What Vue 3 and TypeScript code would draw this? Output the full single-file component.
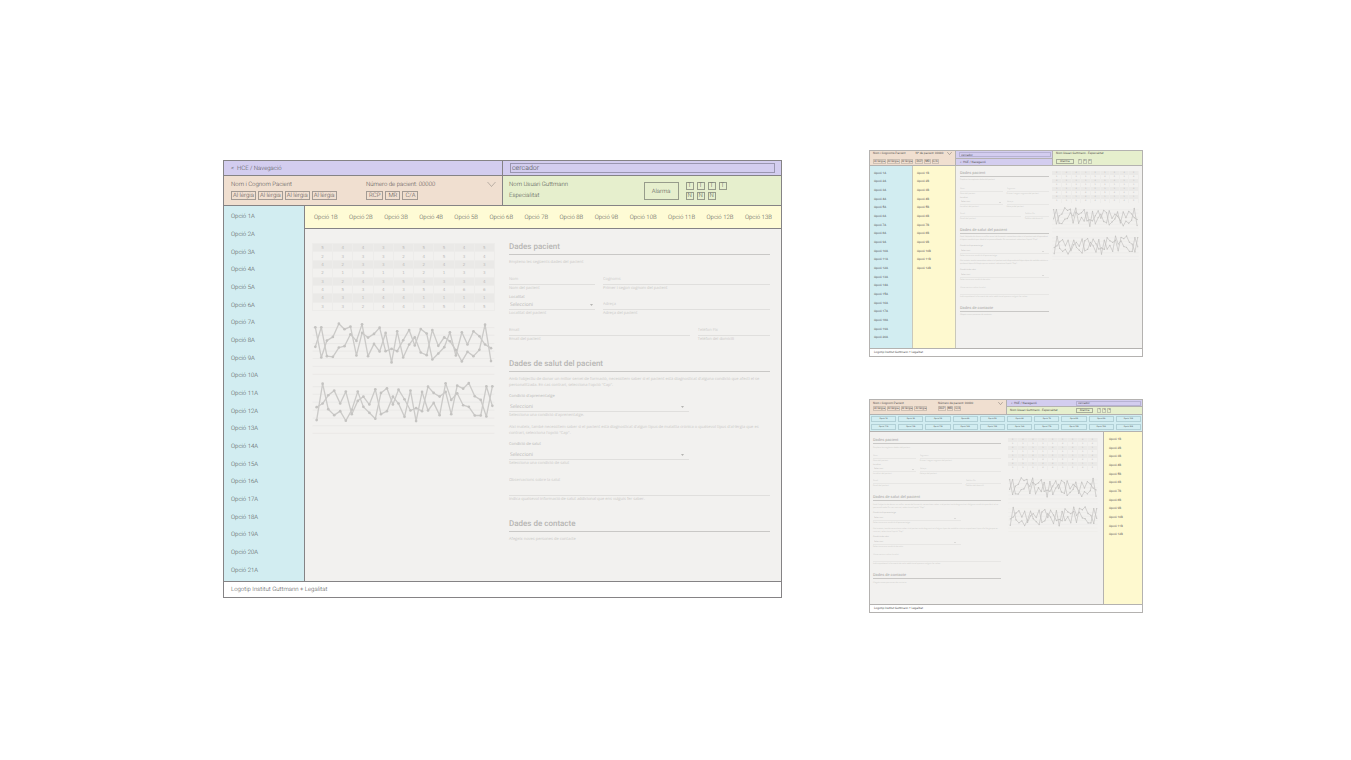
<script setup lang="ts">
interface Board {
  kind: 'large' | 'columns' | 'tabs'
  label: string
  patient: string
  record: string
  user: string
  speciality: string
  allergies: number
  flags: string[]
  countA: number
  countB: number
}

const boards: Board[] = [
  {
    kind: 'large',
    label: 'Pantalla ampla',
    patient: 'Nom i Cognom Pacient',
    record: 'Número de pacient: 00000',
    user: 'Nom Usuari Guttmann',
    speciality: 'Especialitat',
    allergies: 4,
    flags: ['T', 'T', 'T', 'T', 'N', 'N', 'N'],
    countA: 21,
    countB: 13,
  },
  {
    kind: 'columns',
    label: 'Dues columnes',
    patient: 'Nom i Cognoms Pacient',
    record: 'Nº de pacient: 00000',
    user: 'Nom Usuari Guttmann - Especialitat',
    speciality: '',
    allergies: 3,
    flags: ['T', 'N', 'N'],
    countA: 20,
    countB: 12,
  },
  {
    kind: 'tabs',
    label: 'Pestanyes',
    patient: 'Nom i Cognom Pacient',
    record: 'Número de pacient: 00000',
    user: 'Nom Usuari Guttmann - Especialitat',
    speciality: '',
    allergies: 4,
    flags: ['T', 'N', 'N'],
    countA: 20,
    countB: 12,
  },
]

const alerts = ['RCP', 'MR', 'C/A']

const scores = [
  [5, 4, 4, 3, 5, 5, 5, 4, 5],
  [2, 3, 3, 3, 2, 4, 5, 3, 4],
  [4, 2, 3, 3, 4, 2, 4, 2, 3],
  [2, 1, 3, 1, 1, 2, 1, 3, 3],
  [3, 2, 4, 3, 5, 3, 3, 3, 4],
  [4, 5, 3, 4, 3, 5, 4, 6, 6],
  [4, 3, 1, 4, 4, 1, 1, 1, 1],
  [3, 3, 2, 4, 4, 3, 5, 4, 5],
]

interface Chart {
  start: number
  grid: number[]
  series: number[][]
}

const charts: Chart[] = [
  {
    start: 10,
    grid: [17, 40, 65, 88, 110, 134, 158],
    series: [
      [16, 107, 56, 45, 5, 22, 14, 101, 33, 47, 36, 17, 88, 81, 88, 55, 24, 71, 21, 35, 113, 95, 76, 31, 101, 31, 68, 28, 43, 68, 79],
      [75, 16, 103, 105, 77, 73, 37, 57, 7, 103, 66, 89, 33, 122, 28, 107, 68, 46, 92, 100, 24, 72, 46, 58, 85, 119, 90, 103, 84, 8, 118],
    ],
  },
  {
    start: 14,
    grid: [195, 218, 242, 266, 290, 313, 336],
    series: [
      [296, 186, 263, 281, 269, 298, 265, 210, 256, 274, 292, 214, 200, 249, 204, 233, 267, 260, 269, 195, 214, 225, 211, 278, 192, 201, 184, 224, 235, 285, 194],
      [257, 246, 221, 207, 246, 210, 278, 238, 225, 249, 203, 278, 269, 225, 246, 286, 207, 299, 211, 267, 244, 281, 185, 235, 215, 251, 256, 282, 282, 194, 253],
    ],
  },
]

const STEP = 17.67
const px = (chart: Chart, i: number): number => Math.round(chart.start + i * STEP)
const line = (chart: Chart, values: number[]): string =>
  values.map((y, i) => `${px(chart, i)},${y}`).join(' ')
</script>

<template>
  <div class="page">
    <section v-for="b in boards" :key="b.kind" class="board" :class="b.kind" :aria-label="b.label">
      <nav class="crumb"><a href="#">&lt;&nbsp; HCE / Navegació</a></nav>
      <div class="search">
        <input type="search" placeholder="cercador" aria-label="cercador" />
      </div>

      <header class="patient">
        <div class="group">
          <span class="line">{{ b.patient }}</span>
          <div class="chips">
            <span v-for="n in b.allergies" :key="n" class="chip">Al·lèrgia</span>
          </div>
        </div>
        <div class="group">
          <span class="line">{{ b.record }}</span>
          <div class="chips">
            <span v-for="a in alerts" :key="a" class="chip">{{ a }}</span>
          </div>
        </div>
        <button class="chevron" type="button" aria-label="Desplega">
          <svg viewBox="0 0 18 12"><path d="M1 1 L9 10 L17 1" /></svg>
        </button>
      </header>

      <div class="user">
        <div class="who">
          <span>{{ b.user }}</span>
          <span v-if="b.speciality">{{ b.speciality }}</span>
        </div>
        <button class="alarm" type="button">Alarma</button>
        <div class="flags">
          <span v-for="(f, i) in b.flags" :key="i" class="flag">{{ f }}</span>
        </div>
      </div>

      <nav class="options-a">
        <a v-for="n in b.countA" :key="n" href="#">Opció {{ n }}A</a>
      </nav>
      <nav class="options-b">
        <a v-for="n in b.countB" :key="n" href="#">Opció {{ n }}B</a>
      </nav>

      <main class="content">
        <div class="data">
          <table>
            <tbody>
              <tr v-for="(row, r) in scores" :key="r">
                <td v-for="(v, c) in row" :key="c">{{ v }}</td>
              </tr>
            </tbody>
          </table>
          <svg class="charts" viewBox="0 0 552 338">
            <g v-for="(chart, k) in charts" :key="k">
              <line v-for="y in chart.grid" :key="y" class="rule" x1="2" x2="550" :y1="y" :y2="y" />
              <g v-for="(s, j) in chart.series" :key="j">
                <polyline class="trace" :points="line(chart, s)" />
                <circle v-for="(y, i) in s" :key="i" class="dot" :cx="px(chart, i)" :cy="y" r="4" />
              </g>
            </g>
          </svg>
        </div>

        <form class="form">
          <h2>Dades pacient</h2>
          <p><span>Empleno les següents dades del pacient</span></p>
          <div class="row">
            <div class="field">
              <input :id="b.kind + '-nom'" type="text" placeholder="Nom" />
              <label class="help" :for="b.kind + '-nom'">Nom del pacient</label>
            </div>
            <div class="field">
              <input :id="b.kind + '-cognoms'" type="text" placeholder="Cognoms" />
              <label class="help" :for="b.kind + '-cognoms'">Primer i segon cognom del pacient</label>
            </div>
          </div>
          <div class="row near">
            <div class="field">
              <label class="title" :for="b.kind + '-localitat'">Localitat</label>
              <div class="pick">
                <select :id="b.kind + '-localitat'"><option>Seleccioni</option></select>
                <svg viewBox="0 0 6 4"><path d="M0 0H6L3 4Z" /></svg>
              </div>
              <span class="help">Localitat del pacient</span>
            </div>
            <div class="field">
              <input :id="b.kind + '-adreca'" type="text" placeholder="Adreça" />
              <label class="help" :for="b.kind + '-adreca'">Adreça del pacient</label>
            </div>
          </div>
          <div class="row wide">
            <div class="field">
              <input :id="b.kind + '-email'" type="email" placeholder="Email" />
              <label class="help" :for="b.kind + '-email'">Email del pacient</label>
            </div>
            <div class="field">
              <input :id="b.kind + '-telefon'" type="tel" placeholder="Telèfon Fix" />
              <label class="help" :for="b.kind + '-telefon'">Telèfon del domicili</label>
            </div>
          </div>

          <h2>Dades de salut del pacient</h2>
          <p>
            <span>Amb l'objectiu de donar un millor servei de formació, necessitem saber si el pacient està diagnosticat d'alguna condició que afecti el se </span>
            <span>personalitzada. En cas contrari, selecciona l'opció "Cap".</span>
          </p>
          <div class="field single">
            <label class="title" :for="b.kind + '-aprenentatge'">Condició d'aprenentatge</label>
            <div class="pick">
              <select :id="b.kind + '-aprenentatge'"><option>Seleccioni</option></select>
              <svg viewBox="0 0 6 4"><path d="M0 0H6L3 4Z" /></svg>
            </div>
            <span class="help">Selecciona una condició d'aprenentatge.</span>
          </div>
          <p>
            <span>Així mateix, també necessitem saber si el pacient està diagnosticat d'algun tipus de malaltia crònica o qualsevol tipus d'al·lèrgia que es </span>
            <span>contrari, selecciona l'opció "Cap".</span>
          </p>
          <div class="field single">
            <label class="title" :for="b.kind + '-salut'">Condició de salut</label>
            <div class="pick">
              <select :id="b.kind + '-salut'"><option>Seleccioni</option></select>
              <svg viewBox="0 0 6 4"><path d="M0 0H6L3 4Z" /></svg>
            </div>
            <span class="help">Selecciona una condició de salut</span>
          </div>
          <div class="field notes">
            <textarea :id="b.kind + '-notes'" placeholder="Observacions sobre la salut"></textarea>
            <label class="help" :for="b.kind + '-notes'">Indica qualsevol informació de salut addicional que ens vulguis fer saber.</label>
          </div>

          <h2>Dades de contacte</h2>
          <p><span>Afegeix noves persones de contacte</span></p>
        </form>
      </main>

      <footer class="footer">Logotip Institut Guttmann + Legalitat</footer>
    </section>
  </div>
</template>

<style>
body {
  margin: 0;
  background: #fff;
}
</style>

<style scoped>
* {
  box-sizing: border-box;
}

.page {
  display: grid;
  grid-template-columns: 223fr 559fr 87fr 274fr 208fr;
  grid-template-rows: auto auto;
  row-gap: 42px;
  align-items: start;
  padding: 150px 0;
  font-family: Roboto, "Liberation Sans", sans-serif;
  font-weight: 400;
  text-rendering: geometricPrecision;
}

/* ---------- boards ---------- */
.board {
  --edge: #b4b2b0;
  --under: #e7e6e4;
  --pad: 4px;
  --text: 3px;
  --line: 5px;
  --h2: 4px;
  --h2-line: 7px;
  --h2-gap: 6px;
  --small: 2px;
  --pick: 2px;
  --small-line: 3px;
  --title-line: 4px;
  --p-gap: 2px;
  --p-gap-after: 3px;
  --row-gap: 4px;
  --near-gap: 1px;
  --wide-gap: 3px;
  --label-gap: 1px;
  --input: 5px;
  --select: 4px;
  --help: 3px;
  --notes: 9px;
  --col-gap: 4px;
  --cols: 43fr 82fr;
  display: grid;
  grid-row: 1;
  grid-column: 4;
  border: 1px solid var(--edge);
  background: #f2f1ef;
  color: #505050;
  font-size: var(--text);
  line-height: var(--line);
  white-space: nowrap;
}

.large {
  --edge: #858385;
  --under: #e0dfdd;
  --pad: 7px;
  --text: 6px;
  --line: 7px;
  --h2: 8px;
  --h2-line: 14px;
  --h2-gap: 14px;
  --small: 4px;
  --pick: 5px;
  --small-line: 6px;
  --title-line: 6px;
  --p-gap: 5px;
  --p-gap-after: 6px;
  --row-gap: 9px;
  --near-gap: 3px;
  --wide-gap: 9px;
  --label-gap: 3px;
  --input: 9px;
  --select: 8px;
  --help: 7px;
  --notes: 19px;
  --col-gap: 8px;
  --cols: 86fr 167fr;
  grid-row: 1 / 3;
  grid-column: 2;
  margin-top: 10px;
  font-weight: 300;
  grid-template-columns: minmax(0, 81fr) minmax(0, 198fr) minmax(0, 278fr);
  grid-template-rows: 15px 30px 23px auto auto;
  grid-template-areas:
    "crumb crumb search"
    "patient patient user"
    "a b b"
    "a content content"
    "footer footer footer";
}

.columns {
  grid-template-columns: minmax(0, 43fr) minmax(0, 43fr) minmax(0, 97fr) minmax(0, 89fr);
  grid-template-rows: 8px 7px auto auto;
  grid-template-areas:
    "patient patient search user"
    "patient patient crumb user"
    "a b content content"
    "footer footer footer footer";
  --cols: 1fr 1fr;
}

.tabs {
  grid-row: 2;
  grid-template-columns: minmax(0, 137fr) minmax(0, 68fr) minmax(0, 28fr) minmax(0, 39fr);
  grid-template-rows: 7px 8px 17px auto auto;
  grid-template-areas:
    "patient crumb search search"
    "patient user user user"
    "a a a a"
    "content content content b"
    "footer footer footer footer";
}

a {
  color: inherit;
  text-decoration: none;
}

button,
input,
select,
textarea {
  margin: 0;
  padding: 0;
  border: 0;
  border-radius: 0;
  outline: 0;
  background: none;
  color: inherit;
  font: inherit;
  text-rendering: inherit;
  appearance: none;
}

/* ---------- header ---------- */
.crumb,
.search {
  display: flex;
  align-items: center;
  background: #d3cdef;
  border-bottom: 1px solid var(--edge);
}

.crumb {
  grid-area: crumb;
  padding-left: var(--pad);
  border-right: 1px solid var(--edge);
}

.search {
  grid-area: search;
  padding: 0 6px 0 7px;
}

.search input {
  width: 100%;
  height: 10px;
  padding: 0 1px;
  border: 1px solid #9a96b0;
  font-size: 7px;
  line-height: 8px;
}

.search input::placeholder {
  color: #505050;
  opacity: 1;
}

.columns .search,
.tabs .search {
  padding: 0 1px;
}

.columns .search {
  padding-left: 3px;
  border-right: 1px solid var(--edge);
}

.columns .search input,
.tabs .search input {
  height: 5px;
  padding: 0 1px;
  border-color: #b7b2d3;
  font-size: 3px;
  line-height: 3px;
}

.tabs .crumb {
  border-right: 0;
}

.patient {
  grid-area: patient;
  display: grid;
  grid-template-columns: 135fr 121fr auto;
  align-items: start;
  padding: 5px 6px 0 7px;
  background: #f0dfd0;
  border-right: 1px solid var(--edge);
  border-bottom: 1px solid var(--edge);
}

.columns .patient {
  grid-template-columns: 43fr 32fr auto;
  padding: 0 3px;
}

.tabs .patient {
  grid-template-columns: 65fr 60fr auto;
  padding: 1px 3px 0;
}

.group {
  display: flex;
  flex-direction: column;
  gap: 3px;
  min-width: 0;
}

.tabs .group {
  gap: 0;
}

.chips {
  display: flex;
  gap: 2px;
}

.chip {
  padding: 0 1px;
  border: 1px solid #a39b94;
  line-height: 7px;
}

.large .group:nth-child(2) .chip {
  padding: 0 2px;
}

.columns .chips,
.tabs .chips {
  gap: 1px;
}

.columns .chip,
.tabs .chip {
  padding: 0;
  border-color: #cdc0b4;
  line-height: 3px;
}

.chevron {
  width: 9px;
  height: 7px;
}

.chevron svg {
  display: block;
  width: 100%;
  height: 100%;
}

.chevron path {
  fill: none;
  stroke: #857f7b;
  stroke-width: 1;
}

.columns .chevron,
.tabs .chevron {
  width: 5px;
  height: 5px;
}

.columns .chevron path,
.tabs .chevron path {
  stroke-width: 2;
}

.user {
  grid-area: user;
  display: grid;
  grid-template-columns: 140fr auto auto 52fr;
  column-gap: 7px;
  align-items: start;
  padding: 6px 0 0 6px;
  background: #e6efcd;
  border-bottom: 1px solid var(--edge);
}

.who {
  display: flex;
  flex-direction: column;
  gap: 4px;
  margin-top: -1px;
}

.alarm {
  height: 18px;
  padding: 0 7px;
  border: 1px solid #979c8b;
}

.flags {
  display: grid;
  grid-template-columns: repeat(4, 8px);
  gap: 2px 3px;
}

.flag {
  height: 8px;
  border: 1px solid #979c8b;
  line-height: 6px;
  text-align: center;
}

.columns .user {
  grid-template-columns: auto auto 1fr;
  grid-template-rows: 8px auto;
  column-gap: 4px;
  padding: 0 3px;
}

.columns .who {
  grid-column: 1 / 4;
  margin: 0;
}

.tabs .user {
  grid-template-columns: 65fr auto auto 28fr;
  column-gap: 4px;
  padding: 1px 0 0 3px;
}

.tabs .who {
  margin: 0;
}

.columns .alarm,
.tabs .alarm {
  height: 5px;
  padding: 0 3px;
  border-color: #a9ae9c;
  line-height: 3px;
}

.columns .flags,
.tabs .flags {
  grid-template-columns: repeat(3, 4px);
  gap: 1px;
}

.columns .flag,
.tabs .flag {
  height: 5px;
  border-color: #bfc4b1;
  font-size: 2px;
  line-height: 3px;
}

/* ---------- option lists ---------- */
.options-a {
  grid-area: a;
  display: grid;
  grid-template-rows: repeat(21, minmax(0, 1fr));
  align-items: center;
  padding: 2px 0 2px 7px;
  background: #d2edf1;
  border-right: 1px solid var(--edge);
}

.options-b {
  grid-area: b;
  display: flex;
  align-items: center;
  justify-content: space-between;
  padding: 1px 9px 0;
  background: #fefbd5;
  border-bottom: 1px solid var(--edge);
}

.columns .options-a,
.columns .options-b {
  display: grid;
  grid-template-rows: repeat(20, minmax(0, 1fr));
  align-items: center;
  justify-content: start;
  padding: 3px 0 6px 4px;
  border-bottom: 0;
  border-right: 1px solid #c9c8bb;
}

.columns .options-b,
.tabs .options-b {
  background: #fef9cf;
}

.tabs .options-a {
  grid-template-rows: none;
  grid-template-columns: repeat(10, minmax(0, 1fr));
  gap: 2px;
  align-content: center;
  padding: 0 1px;
  border-right: 0;
  border-bottom: 1px solid var(--edge);
}

.tabs .options-a a {
  border: 1px solid #b2d0d6;
  font-size: 2px;
  line-height: 4px;
  text-align: center;
}

.tabs .options-b {
  display: grid;
  grid-template-rows: repeat(19, minmax(0, 1fr));
  align-items: center;
  justify-content: start;
  padding: 3px 0 4px 5px;
  border-left: 1px solid var(--edge);
  border-bottom: 0;
}

/* ---------- content ---------- */
.content {
  grid-area: content;
  display: grid;
  grid-template-columns: minmax(0, 183fr) minmax(0, 261fr);
  column-gap: 14px;
  align-items: start;
  padding: 11px 11px 38px 7px;
}

.columns .content {
  grid-template-columns: minmax(0, 89fr) minmax(0, 87fr);
  column-gap: 3px;
  padding: 3px 3px 31px 4px;
}

.tabs .content {
  grid-template-columns: minmax(0, 128fr) minmax(0, 90fr);
  column-gap: 7px;
  padding: 4px 5px 20px 3px;
}

.data {
  display: flex;
  flex-direction: column;
  gap: 11px;
  padding-top: 3px;
}

.columns .data,
.tabs .data {
  order: 2;
  gap: 4px;
  padding-top: 2px;
}

.tabs .data {
  gap: 7px;
}

table {
  width: 100%;
  height: 68px;
  border-collapse: collapse;
  table-layout: fixed;
  color: #bbbab9;
  font-family: "DejaVu Sans", sans-serif;
  font-size: 4px;
  font-weight: 400;
  line-height: 5px;
}

td {
  padding: 0;
  border: 1px solid #edecea;
  text-align: center;
}

tr:nth-child(odd) {
  background: #eae9e7;
}

.columns table,
.tabs table {
  height: 32px;
  font-size: 2px;
  line-height: 2px;
}

.columns td,
.tabs td {
  border-width: 0 1px 0 0;
}

.charts {
  display: block;
  width: 100%;
}

.rule {
  stroke: #e6e5e3;
  stroke-width: 2;
}

.trace {
  fill: none;
  stroke: #cbcac8;
  stroke-width: 4;
  stroke-linejoin: round;
}

.dot {
  fill: #c4c3c1;
}

.columns .trace,
.tabs .trace {
  stroke: #bfbebc;
}

.form {
  color: #c9c8c6;
  font-weight: 400;
}

h2 {
  margin: var(--h2-gap) 0 0;
  border-bottom: 1px solid #c9c8c6;
  color: #b7b6b4;
  font-size: var(--h2);
  font-weight: 500;
  line-height: var(--h2-line);
}

h2:first-child {
  margin-top: 0;
}

p {
  display: flex;
  flex-direction: column;
  margin: var(--p-gap) 0 0;
  font-family: "Open Sans", sans-serif;
  font-size: var(--small);
  line-height: var(--small-line);
}

.columns p {
  display: block;
  font-family: Lato, sans-serif;
  white-space: normal;
}

.single + p {
  margin-top: var(--p-gap-after);
}

.row {
  display: grid;
  grid-template-columns: var(--cols);
  column-gap: var(--col-gap);
  align-items: end;
  margin-top: var(--row-gap);
}

.row.near {
  margin-top: var(--near-gap);
}

.row.wide {
  grid-template-columns: 180fr 72fr;
  margin-top: var(--wide-gap);
}

.field {
  display: flex;
  flex-direction: column;
  min-width: 0;
  font-family: "Open Sans", sans-serif;
  font-size: var(--small);
}

.field input,
.field textarea {
  width: 100%;
  height: calc(var(--input) + 1px);
  border-bottom: 1px solid var(--under);
  line-height: var(--input);
}

.field textarea {
  height: calc(var(--notes) + 1px);
  overflow: hidden;
  resize: none;
}

.field input::placeholder,
.field textarea::placeholder {
  color: #cccbc9;
  opacity: 1;
}

.title {
  color: #b8b7b5;
  line-height: var(--title-line);
}

.help {
  line-height: var(--help);
}

.pick {
  display: flex;
  align-items: center;
  height: calc(var(--select) + 1px);
  padding: 0 2px 0 1px;
  border-bottom: 1px solid var(--under);
}

.pick select {
  flex: 1;
  min-width: 0;
  height: var(--select);
  color: #b8b7b5;
  font-size: var(--pick);
  line-height: var(--select);
}

.pick svg {
  width: 3px;
  height: 2px;
  fill: #b5b4b2;
}

.columns .pick svg,
.tabs .pick svg {
  width: 2px;
  height: 1px;
}

.single {
  margin-top: var(--p-gap);
}

.single .pick {
  width: 69%;
  margin-top: var(--label-gap);
  padding-right: 5px;
}

.columns .single .pick {
  width: 100%;
}

.notes {
  margin-top: var(--row-gap);
}

/* ---------- footer ---------- */
.footer {
  grid-area: footer;
  padding: 4px 7px;
  border-top: 1px solid var(--edge);
  background: #fff;
}

.columns .footer,
.tabs .footer {
  padding: 1px 4px;
}
</style>
